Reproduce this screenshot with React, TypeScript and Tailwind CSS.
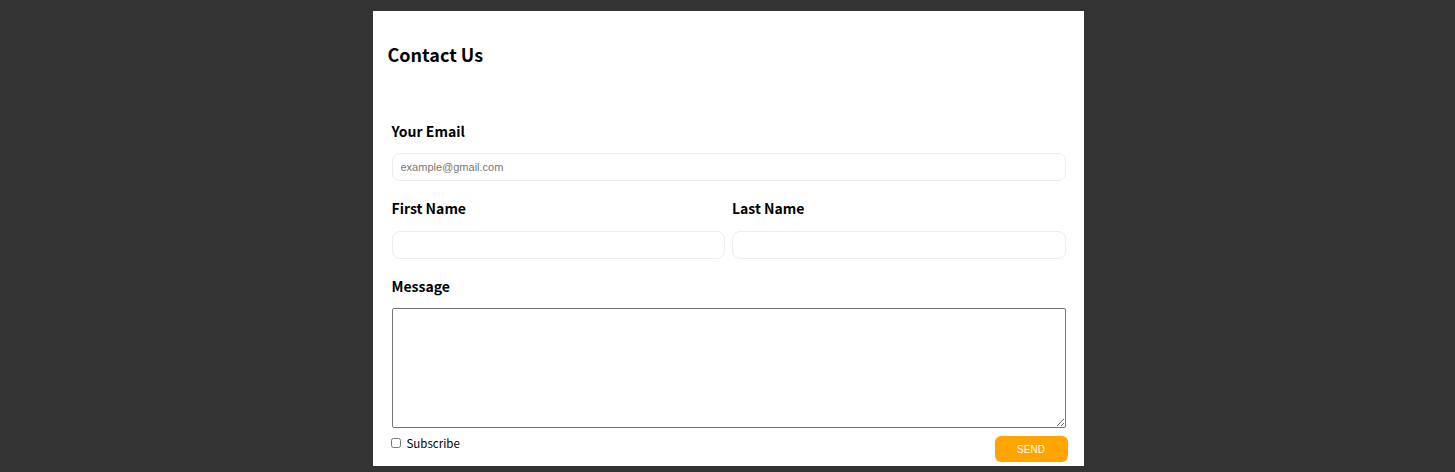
export default function App() {
  const label = "block text-[14px] font-bold leading-[20px] text-black";
  const input =
    "block h-[28px] rounded-[8px] border border-[#ececec] bg-white px-[8px] text-[11px] outline-none placeholder:text-[#777]";
  return (
    <div className="min-h-[472px] w-full bg-[#333333] pt-[11px] pl-[1px] font-['Noto_Sans_CJK_KR','Noto_Sans',sans-serif]">
      <div className="mx-auto h-[455px] w-[711px] bg-white pt-[31px] pl-[15px] pr-[16px]">
        <h2 className="text-[18px] font-bold leading-[24px] text-black">Contact Us</h2>
        <form className="mt-[55px] pl-[4px]" onSubmit={(e) => e.preventDefault()}>
          <label className={label}>Your Email</label>
          <input
            type="email"
            placeholder="example@gmail.com"
            className={`${input} mt-[12px] w-[674px] font-['Liberation_Sans',Arial,sans-serif]`}
          />
          <div className="mt-[17px] flex w-[674px] gap-[7px]">
            <div className="flex-1">
              <label className={label}>First Name</label>
              <input type="text" className={`${input} mt-[13px] w-full`} />
            </div>
            <div className="flex-1">
              <label className={label}>Last Name</label>
              <input type="text" className={`${input} mt-[13px] w-full`} />
            </div>
          </div>
          <label className={`${label} mt-[17px]`}>Message</label>
          <textarea className="mt-[12px] block h-[120px] w-[674px] rounded-[2px] border border-[#767676] bg-white" />
          <div className="mt-[8px] flex w-[676px] items-start justify-between">
            <label className="mt-[-1px] flex items-center gap-[6px] text-[11.5px] leading-[16px] text-black">
              <input type="checkbox" className="h-[10px] w-[10px] ml-[-1px]" />
              Subscribe
            </label>
            <button
              type="submit"
              className="h-[26px] w-[73px] rounded-[6px] bg-[#ffa500] text-[10px] text-white font-['Liberation_Sans',Arial,sans-serif]"
            >
              SEND
            </button>
          </div>
        </form>
      </div>
    </div>
  );
}
